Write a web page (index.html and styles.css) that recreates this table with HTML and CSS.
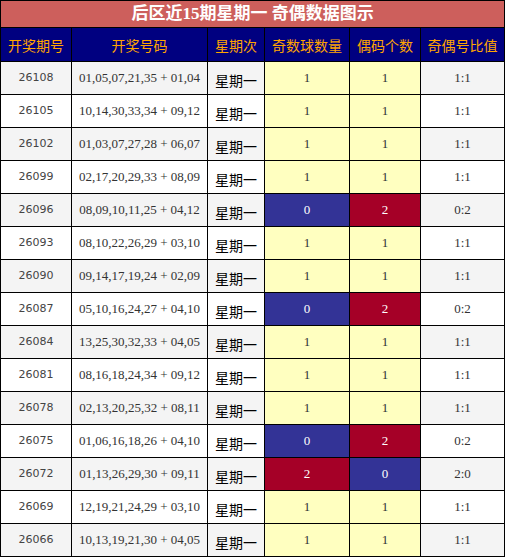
FILE: index.html
```html
<!DOCTYPE html>
<html lang="zh">

<head>
    <meta charset="UTF-8">
    <meta name="viewport" content="width=device-width, initial-scale=1.0">
    <title>后区近15期星期一 奇偶数据图示</title>
    <link rel="stylesheet" href="styles.css">
</head>

<body>
    <table class="chart">
        <colgroup>
            <col class="c-issue">
            <col class="c-nums">
            <col class="c-week">
            <col class="c-odd">
            <col class="c-even">
            <col class="c-ratio">
        </colgroup>
        <tr>
            <td colspan="6" class="title">后区近15期星期一 奇偶数据图示</td>
        </tr>
        <tr class="head">
            <th>开奖期号</th>
            <th>开奖号码</th>
            <th>星期次</th>
            <th>奇数球数量</th>
            <th>偶码个数</th>
            <th>奇偶号比值</th>
        </tr>
        <tr class="grey">
            <td class="issue">26108</td><td class="nums">01,05,07,21,35 + 01,04</td><td class="week">星期一</td>
            <td class="num yellow">1</td><td class="num yellow">1</td><td class="num">1:1</td>
        </tr>
        <tr>
            <td class="issue">26105</td><td class="nums">10,14,30,33,34 + 09,12</td><td class="week">星期一</td>
            <td class="num yellow">1</td><td class="num yellow">1</td><td class="num">1:1</td>
        </tr>
        <tr class="grey">
            <td class="issue">26102</td><td class="nums">01,03,07,27,28 + 06,07</td><td class="week">星期一</td>
            <td class="num yellow">1</td><td class="num yellow">1</td><td class="num">1:1</td>
        </tr>
        <tr>
            <td class="issue">26099</td><td class="nums">02,17,20,29,33 + 08,09</td><td class="week">星期一</td>
            <td class="num yellow">1</td><td class="num yellow">1</td><td class="num">1:1</td>
        </tr>
        <tr class="grey">
            <td class="issue">26096</td><td class="nums">08,09,10,11,25 + 04,12</td><td class="week">星期一</td>
            <td class="num blue">0</td><td class="num red">2</td><td class="num">0:2</td>
        </tr>
        <tr>
            <td class="issue">26093</td><td class="nums">08,10,22,26,29 + 03,10</td><td class="week">星期一</td>
            <td class="num yellow">1</td><td class="num yellow">1</td><td class="num">1:1</td>
        </tr>
        <tr class="grey">
            <td class="issue">26090</td><td class="nums">09,14,17,19,24 + 02,09</td><td class="week">星期一</td>
            <td class="num yellow">1</td><td class="num yellow">1</td><td class="num">1:1</td>
        </tr>
        <tr>
            <td class="issue">26087</td><td class="nums">05,10,16,24,27 + 04,10</td><td class="week">星期一</td>
            <td class="num blue">0</td><td class="num red">2</td><td class="num">0:2</td>
        </tr>
        <tr class="grey">
            <td class="issue">26084</td><td class="nums">13,25,30,32,33 + 04,05</td><td class="week">星期一</td>
            <td class="num yellow">1</td><td class="num yellow">1</td><td class="num">1:1</td>
        </tr>
        <tr>
            <td class="issue">26081</td><td class="nums">08,16,18,24,34 + 09,12</td><td class="week">星期一</td>
            <td class="num yellow">1</td><td class="num yellow">1</td><td class="num">1:1</td>
        </tr>
        <tr class="grey">
            <td class="issue">26078</td><td class="nums">02,13,20,25,32 + 08,11</td><td class="week">星期一</td>
            <td class="num yellow">1</td><td class="num yellow">1</td><td class="num">1:1</td>
        </tr>
        <tr>
            <td class="issue">26075</td><td class="nums">01,06,16,18,26 + 04,10</td><td class="week">星期一</td>
            <td class="num blue">0</td><td class="num red">2</td><td class="num">0:2</td>
        </tr>
        <tr class="grey">
            <td class="issue">26072</td><td class="nums">01,13,26,29,30 + 09,11</td><td class="week">星期一</td>
            <td class="num red">2</td><td class="num blue">0</td><td class="num">2:0</td>
        </tr>
        <tr>
            <td class="issue">26069</td><td class="nums">12,19,21,24,29 + 03,10</td><td class="week">星期一</td>
            <td class="num yellow">1</td><td class="num yellow">1</td><td class="num">1:1</td>
        </tr>
        <tr class="grey">
            <td class="issue">26066</td><td class="nums">10,13,19,21,30 + 04,05</td><td class="week">星期一</td>
            <td class="num yellow">1</td><td class="num yellow">1</td><td class="num">1:1</td>
        </tr>
    </table>
</body>

</html>
```

FILE: styles.css
```css
body {
    margin: 0;
    padding: 0;
    background: #ffffff;
    font-family: "Liberation Serif", "Noto Sans CJK SC", serif;
}

/* Table */
.chart {
    border-collapse: collapse;
    table-layout: fixed;
    width: 505px;
    border: 1px solid #000;
}

.c-issue { width: 71px; }
.c-nums { width: 136px; }
.c-week { width: 57px; }
.c-odd { width: 85px; }
.c-even { width: 71px; }
.c-ratio { width: 84px; }

.chart td,
.chart th {
    border: 1px solid #000;
    padding: 0;
    text-align: center;
    white-space: nowrap;
    overflow: hidden;
}

/* Title bar */
.chart .title {
    height: 26px;
    background-color: #cd5f5c;
    color: #ffffff;
    font-family: "Liberation Serif", "Noto Sans CJK SC", serif;
    font-size: 17px;
    font-weight: bold;
    line-height: 26px;
}

/* Header row */
.head th {
    height: 33px;
    background-color: #000080;
    color: #ffa500;
    font-family: "Noto Sans CJK SC", sans-serif;
    font-size: 14px;
    font-weight: normal;
    line-height: 20px;
}

/* Data rows */
.chart td {
    height: 32px;
    color: #333;
    font-size: 13px;
    line-height: 16px;
    background-color: #ffffff;
}

.grey td {
    background-color: #f4f4f4;
}

.chart .issue {
    font-family: "DejaVu Sans", sans-serif;
    font-size: 11px;
    color: #444;
}

.chart .week {
    height: 29px;
    padding-top: 3px;
    color: #000;
    font-family: "Noto Sans CJK SC", sans-serif;
    font-size: 14px;
    line-height: 18px;
}

.chart .yellow {
    background-color: #ffffc0;
}

.chart .blue {
    background-color: #333396;
    color: #fff;
}

.chart .red {
    background-color: #a50027;
    color: #fff;
}
```
